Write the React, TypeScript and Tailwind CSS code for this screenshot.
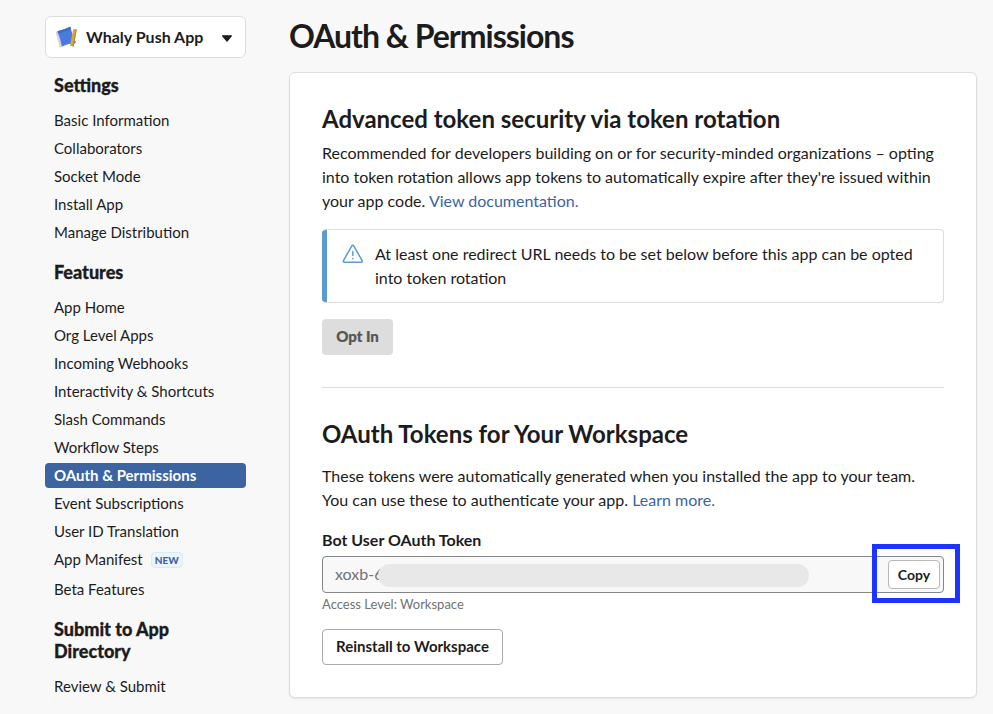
type NavItem = { label: string; active?: boolean; badge?: string };
type NavGroup = { title: string; items: NavItem[] };

const groups: NavGroup[] = [
  {
    title: "Settings",
    items: [
      { label: "Basic Information" },
      { label: "Collaborators" },
      { label: "Socket Mode" },
      { label: "Install App" },
      { label: "Manage Distribution" },
    ],
  },
  {
    title: "Features",
    items: [
      { label: "App Home" },
      { label: "Org Level Apps" },
      { label: "Incoming Webhooks" },
      { label: "Interactivity & Shortcuts" },
      { label: "Slash Commands" },
      { label: "Workflow Steps" },
      { label: "OAuth & Permissions", active: true },
      { label: "Event Subscriptions" },
      { label: "User ID Translation" },
      { label: "App Manifest", badge: "NEW" },
      { label: "Beta Features" },
    ],
  },
  { title: "Submit to App Directory", items: [{ label: "Review & Submit" }] },
];

function AppIcon() {
  return (
    <svg className="h-6 w-6 shrink-0" viewBox="0 0 24 24">
      <path d="M.6 7 L4 6 L8 21.5 L4.8 22.8 Z" fill="#d3d5d8" />
      <path d="M18 14 L21 17 L19.6 18.4 L16 19 Z" fill="#3f62ad" />
      <path d="M2.4 6.2 Q9 5 15.2 1.8 Q17.8 9 19.4 18 Q12.5 18.8 6.8 21.6 Q5.4 13 2.4 6.2 Z" fill="#4a7bdc" />
      <path d="M2.4 6.2 Q9 5 15.2 1.8 L16 4 Q10 6.8 3.3 8.4 Z" fill="#3b6bcb" />
      <path d="M18.2 4 L21.8 4.6 L18.6 21.4 L15 20.8 Z" fill="#dba541" />
      <path d="M20.7 4.4 L21.8 4.6 L18.6 21.4 L17.5 21.2 Z" fill="#b98731" />
    </svg>
  );
}

function AppPicker() {
  return (
    <button className="flex h-[42px] w-full items-center rounded-[6px] border border-[#dddddd] bg-white pr-[12px] pl-[9px]">
      <AppIcon />
      <span className="ml-[7px] text-[16px] leading-6 font-bold">Whaly Push App</span>
      <svg className="mt-[2px] ml-auto h-[7px] w-[12px]" viewBox="0 0 12 7">
        <path d="M1.6 .8 H10.4 L6 6 Z" fill="#1d1c1d" stroke="#1d1c1d" strokeWidth="1.2" strokeLinejoin="round" />
      </svg>
    </button>
  );
}

function Sidebar() {
  return (
    <nav className="w-[201px] shrink-0 pt-4">
      <AppPicker />
      <div className="mt-[16px] flex flex-col gap-[13px]">
        {groups.map((g) => (
          <section key={g.title}>
            <h4 className="mb-[12px] w-[150px] pl-[9px] text-[18px] leading-[22px] font-black [-webkit-text-stroke:0.3px_#1d1c1d]">
              {g.title}
            </h4>
            {g.items.map((it) => (
              <a
                key={it.label}
                className={
                  it.active
                    ? "mb-[3px] flex h-[25px] items-center rounded-[4px] bg-[#3c64a1] pl-[9px] text-[15px] font-bold text-white"
                    : it.badge
                      ? "mb-[3px] flex h-[27px] items-center pb-[2px] pl-[9px] text-[15px]"
                      : "mb-[3px] flex h-[25px] items-center pl-[9px] text-[15px]"
                }
              >
                {it.label}
                {it.badge && (
                  <span className="mt-px ml-[8px] flex h-4 w-8 items-center justify-center rounded-[4px] border border-[#d5ebf7] bg-[#eaf4fb] text-[10px] font-black text-[#3c64a1]">
                    {it.badge}
                  </span>
                )}
              </a>
            ))}
          </section>
        ))}
      </div>
    </nav>
  );
}

function Notice() {
  return (
    <div className="mt-4 flex h-[74px] overflow-hidden rounded-[4px] border border-l-0 border-[#dddddd]">
      <div className="-my-px w-[5px] shrink-0 bg-[#5b9bd1]" />
      <svg className="mt-[14px] ml-[15px] h-[20px] w-[22px] shrink-0" viewBox="0 0 22 20" fill="none" stroke="#5b9bd1" strokeWidth="1.5" strokeLinecap="round" strokeLinejoin="round">
        <path d="M9.7 2.1 L1.6 16.4 Q.7 18.2 2.7 18.2 H18.9 Q20.9 18.2 20 16.4 L11.9 2.1 Q10.8 .5 9.7 2.1 Z" />
        <path d="M10.8 7.5 V11.6 M10.8 14.6 V14.8" />
      </svg>
      <p className="mt-[12px] ml-[11px] w-[550px] text-[16px] leading-6">
        At least one redirect URL needs to be set below before this app can be opted into token rotation
      </p>
    </div>
  );
}

function TokenField() {
  return (
    <div className="relative mt-[4px] flex h-[37px] items-center rounded-[4px] border border-[#868686] bg-[#f8f8f8] pr-[3px] pl-[12px]">
      <span className="pb-[2px] text-[16px] text-[#717274]">xoxb-6</span>
      <div className="absolute top-[7px] left-[55px] h-[23px] w-[431px] rounded-full bg-[#e8e8e8]" />
      <button className="ml-auto h-[29px] w-[52px] rounded-[4px] border border-[#b8b8b8] bg-white text-[14px] font-bold">
        Copy
      </button>
      <div className="absolute -top-[13px] -right-[17px] h-[59px] w-[88px] border-[5px] border-[#1d33ff]" />
    </div>
  );
}

export default function App() {
  return (
    <div className="flex h-[714px] w-[993px] overflow-hidden bg-[#f8f8f8] pl-[45px] font-['Lato','Liberation_Sans',sans-serif] text-[#1d1c1d]">
      <Sidebar />
      <main className="ml-[43px] w-[688px]">
        <h1 className="pt-[15px] text-[32px] leading-[42px] font-bold tracking-[-1px]">OAuth &amp; Permissions</h1>
        <div className="mt-[15px] h-[626px] rounded-[6px] border border-[#dddddd] bg-white px-8 shadow-[0_1px_2px_rgba(0,0,0,0.08)]">
          <h2 className="pt-[31px] text-[24px] leading-[30px] font-bold">Advanced token security via token rotation</h2>
          <p className="mt-[7px] text-[16px] leading-6">
            Recommended for developers building on or for security-minded organizations – opting into token rotation
            allows app tokens to automatically expire after they're issued within your app code.{" "}
            <a className="text-[#3c64a1]">View documentation.</a>
          </p>
          <Notice />
          <button className="mt-4 block h-9 w-[71px] rounded-[4px] bg-[#dddddd] pb-[2px] text-[15px] font-black text-[#565656] [-webkit-text-stroke:0.2px_#565656]">
            Opt In
          </button>
          <hr className="mt-8 border-[#dddddd]" />
          <h2 className="mt-[31px] text-[24px] leading-[30px] font-bold">OAuth Tokens for Your Workspace</h2>
          <p className="mt-[15px] w-[610px] text-[16px] leading-6">
            These tokens were automatically generated when you installed the app to your team. You can use these to
            authenticate your app. <a className="text-[#3c64a1]">Learn more.</a>
          </p>
          <label className="mt-4 block text-[16px] leading-6 font-bold">Bot User OAuth Token</label>
          <TokenField />
          <p className="mt-[2px] text-[13px] leading-[18px] text-[#717274]">Access Level: Workspace</p>
          <button className="mt-[16px] block h-9 w-[181px] rounded-[4px] border border-[#ababab] bg-white pb-[2px] text-[15px] font-bold">
            Reinstall to Workspace
          </button>
        </div>
      </main>
    </div>
  );
}
